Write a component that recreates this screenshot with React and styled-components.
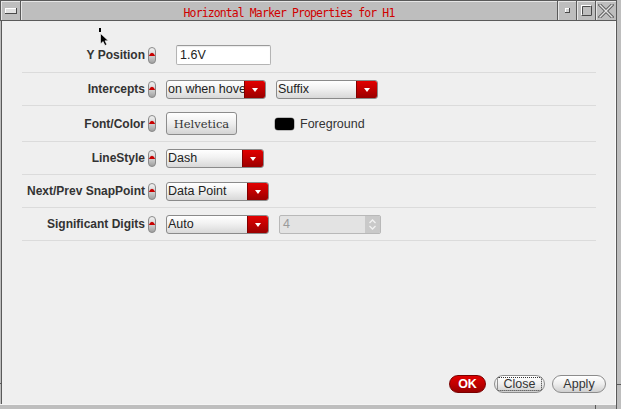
import React from 'react';
import styled, { createGlobalStyle } from 'styled-components';

const Global = createGlobalStyle`
  html, body { margin: 0; padding: 0; background: #bebebe; }
  body { font-family: "Liberation Sans", Arial, sans-serif; }
  #root { width: 621px; height: 409px; }
`;

const DARK = '#5a5a5a';

const Window = styled.div`
  position: relative;
  width: 621px;
  height: 409px;
  display: flex;
  background: #bebebe;
  overflow: hidden;
`;

const Main = styled.div`
  flex: 1;
  min-width: 0;
  display: flex;
  flex-direction: column;
`;

const RightFrame = styled.div`
  width: 4px;
  border-left: 1px solid ${DARK};
  display: flex;
  flex-direction: column;
`;

const FrameSeg = styled.div`
  flex: ${p => (p.$fill ? 1 : 'none')};
  ${p => (p.$size ? `height: ${p.$size}px;` : '')}
  ${p => (p.$tick ? `border-top: 1px solid ${DARK};` : '')}
`;

const TitleBar = styled.div`
  height: 19px;
  display: flex;
  border-top: 1px solid ${DARK};
  border-bottom: 1px solid ${DARK};
  border-left: 1px solid ${DARK};
  background: #bebebe;
`;

const TitleCell = styled.div`
  width: ${p => (p.$w ? `${p.$w}px` : 'auto')};
  flex: ${p => (p.$w ? 'none' : 1)};
  display: flex;
  align-items: center;
  justify-content: center;
  box-shadow: inset 1px 1px 0 #e6e6e6;
  ${p => (p.$sep ? `border-left: 1px solid ${DARK};` : '')}
`;

const TitleText = styled.span`
  font-family: "DejaVu Sans Mono", "Liberation Mono", monospace;
  font-size: 11.5px;
  letter-spacing: -0.9px;
  color: #d00000;
  padding-top: 4px;
`;

const Body = styled.div`
  flex: 1;
  display: flex;
  min-height: 0;
`;

const LeftFrame = styled.div`
  width: 1px;
  border-right: 1px solid ${DARK};
  display: flex;
  flex-direction: column;
`;

const Content = styled.div`
  flex: 1;
  background: #efefef;
  display: flex;
  flex-direction: column;
  padding-top: 17px;
  box-shadow: inset -1px 0 0 #fafafa;
`;

const BottomFrame = styled.div`
  height: 4px;
  border-top: 1px solid #f4f4f4;
  display: flex;
`;

const BottomSeg = styled.div`
  ${p => (p.$w ? `width: ${p.$w}px;` : 'flex: 1;')}
  ${p => (p.$tick ? `border-left: 1px solid ${DARK};` : '')}
`;

const Rows = styled.div`
  margin: 0 20px;
  display: flex;
  flex-direction: column;
`;

const Row = styled.div`
  height: ${p => p.$h}px;
  display: flex;
  align-items: center;
  border-bottom: 1px solid #dbdbdb;
`;

const Label = styled.div`
  width: 123px;
  text-align: right;
  font-size: 12px;
  font-weight: bold;
  color: #333;
  white-space: nowrap;
`;

const PillWrap = styled.div`
  margin-left: 3px;
  width: 8px;
  height: 17px;
  display: flex;
`;

const Controls = styled.div`
  margin-left: 10px;
  display: flex;
  align-items: center;
  gap: 10px;
`;

const TextInput = styled.div`
  margin-left: 10px;
  width: 90px;
  height: 18px;
  border: 1px solid #b4b4b4;
  border-top-color: #9a9a9a;
  border-radius: 2px;
  background: #fff;
  box-shadow: inset 0 1px 1px rgba(0,0,0,0.08);
  font-size: 12.5px;
  color: #222;
  padding-left: 3px;
  display: flex;
  align-items: center;
  box-sizing: content-box;
`;

const ComboBox = styled.div`
  width: ${p => p.$w}px;
  height: 19px;
  box-sizing: border-box;
  border: 1px solid #8a8a8a;
  border-radius: 3px;
  background: linear-gradient(#ffffff, #f1f1f1 45%, #d8d8d8);
  display: flex;
  overflow: hidden;
`;

const ComboText = styled.span`
  flex: 1;
  min-width: 0;
  white-space: nowrap;
  font-size: 12.5px;
  color: #222;
  padding-left: 1px;
  line-height: 17px;
`;

const ComboArrow = styled.span`
  width: 20px;
  background: linear-gradient(#e20000, #c00000 50%, #9a0000);
  border-left: 1px solid #800000;
  display: flex;
  align-items: center;
  justify-content: center;
  &::after {
    content: '';
    border-left: 3.5px solid transparent;
    border-right: 3.5px solid transparent;
    border-top: 4px solid #fff;
    margin-top: 1px;
  }
`;

const PushButton = styled.div`
  width: 71px;
  height: 23px;
  box-sizing: border-box;
  border: 1px solid #8c8c8c;
  border-radius: 3px;
  background: linear-gradient(#ffffff, #eeeeee 50%, #d4d4d4);
  font-family: "DejaVu Serif", "Liberation Serif", serif;
  font-size: 11.5px;
  color: #333;
  display: flex;
  align-items: center;
  justify-content: center;
  padding-top: 1px;
`;

const ColorItem = styled.div`
  display: flex;
  align-items: center;
  gap: 6px;
  margin-left: 28px;
  font-size: 12.5px;
  color: #333;
`;

const Swatch = styled.span`
  width: 19px;
  height: 12px;
  background: #000;
  border-radius: 3px;
  box-shadow: 0 0 0 0.5px #888;
`;

const SpinBox = styled.div`
  width: 102px;
  height: 19px;
  box-sizing: border-box;
  border: 1px solid #b8b8b8;
  border-radius: 2px;
  background: #e3e3e3;
  display: flex;
  overflow: hidden;
`;

const SpinText = styled.span`
  flex: 1;
  font-size: 12.5px;
  color: #9a9a9a;
  padding-left: 3px;
  line-height: 17px;
`;

const SpinArrows = styled.span`
  width: 15px;
  background: #c9c9c9;
  display: flex;
  align-items: center;
  justify-content: center;
`;

const Footer = styled.div`
  margin-top: auto;
  display: flex;
  justify-content: flex-end;
  align-items: center;
  gap: 7px;
  padding: 0 10px 11px 0;
`;

const DialogButton = styled.div`
  width: ${p => p.$w}px;
  height: 18px;
  box-sizing: border-box;
  border-radius: 9px;
  border: 1px solid ${p => (p.$primary ? '#7a0000' : '#8c8c8c')};
  background: ${p =>
    p.$primary
      ? 'linear-gradient(#e00000, #c00000 50%, #980000)'
      : 'linear-gradient(#ffffff, #eeeeee 50%, #cfcfcf)'};
  color: ${p => (p.$primary ? '#fff' : '#333')};
  font-size: 12.5px;
  font-weight: ${p => (p.$primary ? 'bold' : 'normal')};
  display: flex;
  align-items: center;
  justify-content: center;
  margin-left: ${p => p.$ml || 0}px;
  position: relative;
  ${p =>
    p.$focus
      ? `&::before { content: ''; position: absolute; inset: 1px 2px; border: 1px dotted #333; border-radius: 2px; }`
      : ''}
`;

const Cursor = styled.svg`
  position: absolute;
  left: 98px;
  top: 28px;
`;

const Pill = () => (
  <PillWrap>
    <svg width="8" height="17" viewBox="0 0 8 17">
      <defs>
        <linearGradient id="pillg" x1="0" y1="0" x2="0" y2="1">
          <stop offset="0" stopColor="#f4f4f4" />
          <stop offset="0.6" stopColor="#c8c8c8" />
          <stop offset="1" stopColor="#9c9c9c" />
        </linearGradient>
      </defs>
      <rect x="0.5" y="0.5" width="7" height="16" rx="3.5" fill="url(#pillg)" stroke="#8a8a8a" />
      <path d="M0.8 9 Q4 2.5 7.2 9 Z" fill="#c80000" />
    </svg>
  </PillWrap>
);

const Combo = ({ w, children }) => (
  <ComboBox $w={w}>
    <ComboText>{children}</ComboText>
    <ComboArrow />
  </ComboBox>
);

const Field = ({ label, h, children }) => (
  <Row $h={h}>
    <Label>{label}</Label>
    <Pill />
    <Controls>{children}</Controls>
  </Row>
);

export default function App() {
  return (
    <>
      <Global />
      <Window>
        <Main>
          <TitleBar>
            <TitleCell $w={19}>
              <svg width="12" height="6" viewBox="0 0 12 6">
                <rect x="0" y="0" width="12" height="6" fill="#4a4a4a" />
                <rect x="0" y="0" width="11" height="5" fill="#ffffff" />
                <rect x="1" y="1" width="10" height="4" fill="#e2e2e2" />
              </svg>
            </TitleCell>
            <TitleCell $sep>
              <TitleText>Horizontal Marker Properties for H1</TitleText>
            </TitleCell>
            <TitleCell $sep $w={18}>
              <svg width="5" height="5" viewBox="0 0 5 5">
                <rect x="0" y="0" width="5" height="5" fill="#4a4a4a" />
                <rect x="0" y="0" width="4" height="4" fill="#ffffff" />
                <rect x="1" y="1" width="3" height="3" fill="#d4d4d4" />
              </svg>
            </TitleCell>
            <TitleCell $sep $w={18}>
              <svg width="11" height="11" viewBox="0 0 11 11">
                <rect x="0.5" y="0.5" width="10" height="10" fill="none" stroke="#ffffff" />
                <path d="M10.5 0.5 V10.5 H0.5" fill="none" stroke="#4a4a4a" />
                <path d="M1.5 9.5 V1.5 H9.5" fill="none" stroke="#4a4a4a" />
              </svg>
            </TitleCell>
            <TitleCell $sep $w={20}>
              <svg width="16" height="14" viewBox="0 0 16 14">
                <path d="M2 1 L14 13 M14 1 L2 13" stroke="#5a5a5a" strokeWidth="3.2" strokeLinecap="square" />
                <path d="M2 1 L14 13 M14 1 L2 13" stroke="#e4e4e4" strokeWidth="1.4" strokeLinecap="square" />
              </svg>
            </TitleCell>
          </TitleBar>
          <Body>
            <LeftFrame>
              <FrameSeg $size={362} />
              <FrameSeg $fill $tick />
            </LeftFrame>
            <Content>
              <Rows>
                <Field label="Y Position" h={34}>
                  <TextInput>1.6V</TextInput>
                </Field>
                <Field label="Intercepts" h={32}>
                  <Combo w={100}>on when hove</Combo>
                  <Combo w={102}>Suffix</Combo>
                </Field>
                <Field label="Font/Color" h={35}>
                  <PushButton>Helvetica</PushButton>
                  <ColorItem>
                    <Swatch />
                    Foreground
                  </ColorItem>
                </Field>
                <Field label="LineStyle" h={32}>
                  <Combo w={98}>Dash</Combo>
                </Field>
                <Field label="Next/Prev SnapPoint" h={32}>
                  <Combo w={103}>Data Point</Combo>
                </Field>
                <Field label="Significant Digits" h={32}>
                  <Combo w={103}>Auto</Combo>
                  <SpinBox>
                    <SpinText>4</SpinText>
                    <SpinArrows>
                      <svg width="9" height="13" viewBox="0 0 9 13">
                        <path d="M1.5 5 L4.5 2 L7.5 5" fill="none" stroke="#f2f2f2" strokeWidth="1.3" />
                        <path d="M1.5 8 L4.5 11 L7.5 8" fill="none" stroke="#f2f2f2" strokeWidth="1.3" />
                      </svg>
                    </SpinArrows>
                  </SpinBox>
                </Field>
              </Rows>
              <Footer>
                <DialogButton $w={37} $primary>OK</DialogButton>
                <DialogButton $w={51} $focus $ml={1}>Close</DialogButton>
                <DialogButton $w={54}>Apply</DialogButton>
              </Footer>
            </Content>
          </Body>
          <BottomFrame>
            <BottomSeg $w={20} />
            <BottomSeg />
            <BottomSeg $w={20} $tick />
          </BottomFrame>
        </Main>
        <RightFrame>
          <FrameSeg $size={384} />
          <FrameSeg $fill $tick />
        </RightFrame>
        <Cursor width="12" height="19" viewBox="0 0 12 19">
          <rect x="1" y="0" width="2" height="4" fill="#000" />
          <path d="M2.5 5.5 L2.5 16 L5 13.5 L7 17.5 L8.8 16.6 L7 12.8 L10.3 12.8 Z" fill="#000" stroke="#fff" strokeWidth="0.6" />
        </Cursor>
      </Window>
    </>
  );
}
